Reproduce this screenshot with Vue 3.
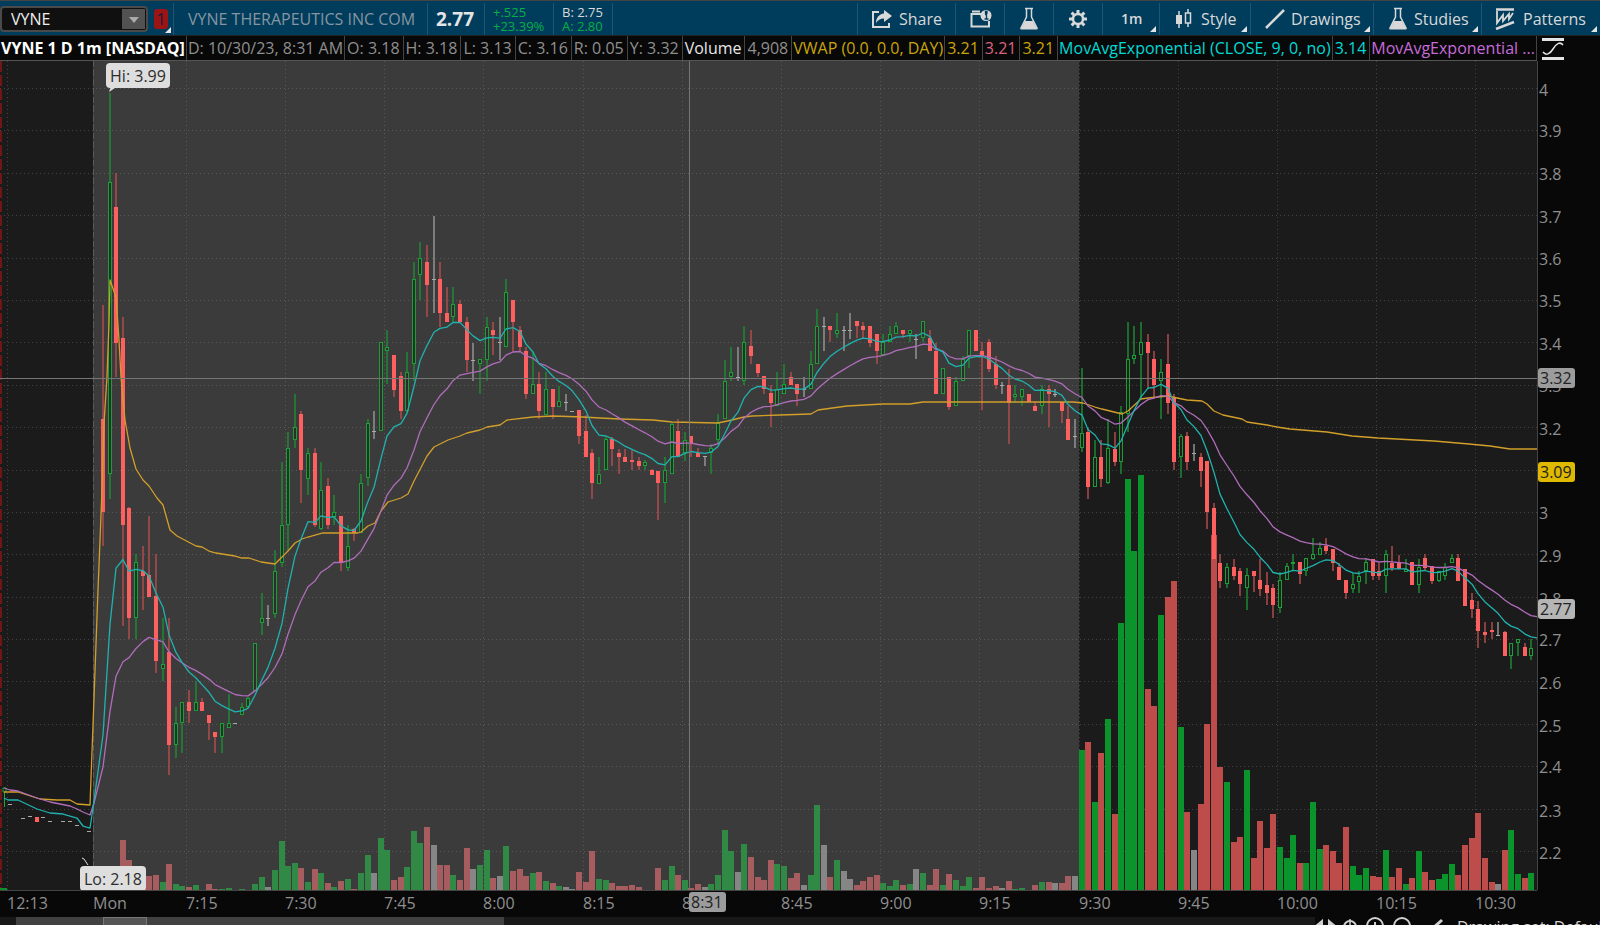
<template>
  <div class="platform">
    <header class="toolbar">
      <div class="symbol-box">
        <div class="select-wrap">
          <select v-model="symbol" aria-label="Symbol">
            <option>VYNE</option>
          </select>
        </div>
        <button class="link-badge corner" aria-label="Link group">1</button>
      </div>
      <div class="company">VYNE THERAPEUTICS INC COM</div>
      <div class="last">2.77</div>
      <div class="stack change"><span>+.525</span><span>+23.39%</span></div>
      <div class="stack quote"><span>B: 2.75</span><span class="up">A: 2.80</span></div>
      <div class="spacer"></div>
      <button class="tool share">
        <svg width="22" height="20" viewBox="0 0 22 20">
          <path d="M8 3H2v15h16v-4" fill="none" stroke="currentColor" stroke-width="2" />
          <path d="M13 1l8 6-8 6V9.500C9 9.500 7 11 5 14c0-5 3-9 8-9.500z" fill="currentColor" />
        </svg>
        Share
      </button>
      <button class="tool info" aria-label="Chart info">
        <svg width="22" height="20" viewBox="0 0 22 20">
          <path d="M11 5H1.500V17.500H19V12M2 2.500h8" fill="none" stroke="currentColor" stroke-width="2" />
          <circle cx="16" cy="6.500" r="5.500" fill="currentColor" />
          <path d="M15 5.500h1.500V10M14.500 10h4M15.500 2.500h1.500v1.500h-1.500z" fill="none" stroke="#003d5d" stroke-width="1.300" />
        </svg>
      </button>
      <button class="tool lab" aria-label="Lab">
        <svg width="20" height="24" viewBox="0 0 20 24">
          <path :d="flask" fill="none" stroke="currentColor" stroke-width="1.500" />
          <path :d="flaskFill" fill="currentColor" />
        </svg>
      </button>
      <button class="tool gear" aria-label="Settings">
        <svg width="20" height="20" viewBox="0 0 20 20">
          <g stroke="currentColor" stroke-width="3">
            <path v-for="a in [0, 45, 90, 135]" :key="a" d="M10 1v4M10 15v4" :transform="`rotate(${a} 10 10)`" />
          </g>
          <circle cx="10" cy="10" r="5" fill="none" stroke="currentColor" stroke-width="2.500" />
        </svg>
      </button>
      <button class="tool interval corner">1m</button>
      <button class="tool style corner">
        <svg width="18" height="20" viewBox="0 0 18 20">
          <path d="M4 2v17M13 0v4M13 14v4" stroke="currentColor" stroke-width="1.500" />
          <rect x="1" y="6" width="6" height="9" fill="currentColor" />
          <rect x="10.500" y="4" width="5" height="10" fill="none" stroke="currentColor" stroke-width="1.500" />
        </svg>
        Style
      </button>
      <button class="tool drawings corner">
        <svg width="20" height="20" viewBox="0 0 20 20"><path d="M1 19L19 1" stroke="currentColor" stroke-width="2.500" /></svg>
        Drawings
      </button>
      <button class="tool studies corner">
        <svg width="20" height="24" viewBox="0 0 20 24">
          <path :d="flask" fill="none" stroke="currentColor" stroke-width="1.500" />
          <path :d="flaskFill" fill="currentColor" />
        </svg>
        Studies
      </button>
      <button class="tool patterns corner">
        <svg width="20" height="22" viewBox="0 0 20 22">
          <path d="M1 1.500h18M1 21l18-7" stroke="currentColor" stroke-width="2.500" />
          <path d="M2 3v12l6-8v6l6-7v5l4-6" fill="none" stroke="currentColor" stroke-width="1.800" />
        </svg>
        Patterns
      </button>
    </header>

    <div class="legend">
      <div class="cells">
        <span v-for="(cell, n) in legend" :key="n" :class="['cell', cell[1]]">{{ cell[0] }}</span>
      </div>
      <button class="scale" aria-label="Scale settings">
        <svg width="22" height="24" viewBox="0 0 22 24">
          <path d="M0 2.500h22M0 21.500h22" stroke="currentColor" stroke-width="3" />
          <path d="M1 15c3 4 7 2 10-3s7-8 10-4" fill="none" stroke="currentColor" stroke-width="1.500" />
        </svg>
      </button>
    </div>

    <main class="chart">
      <div class="plot">
        <svg class="canvas" viewBox="0 61 1537 829" preserveAspectRatio="none">
          <rect x="93" y="61" width="986" height="829" class="premarket" />
          <g class="grid">
            <path v-for="p in prices" :key="p" :d="`M0 ${priceY(p)}H1537`" />
            <path v-for="t in times" :key="t.x" :d="`M${t.x + 0.5} 61V890`" />
          </g>
          <path d="M93.500 61V890" class="day-line" />
          <path d="M1 61V890" class="open-line" />

          <rect x="0" y="888" width="7" height="2" fill="#0b942b" />
          <rect v-for="b in bars" :key="b.i" :x="b.x - 3" :y="b.vol" width="6" :height="890 - b.vol" :fill="volumeColor(b)" />

          <g v-for="b in bars" :key="b.i" :class="['candle', b.kind]">
            <path :d="wick(b)" class="wick" />
            <rect v-if="b.kind === 'r'" :x="b.x - 2" :y="b.top" width="4" :height="Math.max(b.bottom - b.top, 1)" class="body" />
            <rect v-else-if="b.kind === 'g'" :x="b.x - 1.5" :y="b.top + 0.5" width="3" :height="Math.max(b.bottom - b.top - 1, 1)" class="body" />
            <path v-else :d="`M${b.x - 2} ${b.top + 0.5}h4`" class="tick" />
          </g>

          <path v-for="d in dashes" :key="d[0]" :d="`M${d[0] - 2} ${d[1]}.5h4`" class="tick" />
          <path d="M4.500 792V807M3 788h3v4h-3z" stroke="#1aa637" fill="none" />
          <rect x="35" y="817" width="4" height="5" fill="#fe5f5f" />

          <polyline :points="vwap" class="line vwap" />
          <polyline :points="slow" class="line slow" />
          <polyline :points="fast" class="line fast" />
          <path d="M0 378.500H1537M689.500 61V890" class="cross" />
          <path d="M109 92l2-6h7z" fill="#dedede" />
          <path d="M82 858l2 1 4 6" stroke="#dedede" fill="none" />
        </svg>
        <span class="bubble" :style="{ left: '6.9%', top: '0.2%' }">Hi: 3.99</span>
        <span class="bubble" :style="{ left: '5.2%', top: '97.1%' }">Lo: 2.18</span>
      </div>
      <div class="price-axis">
        <span v-for="p in labelled" :key="p" class="price" :style="{ top: axisTop(priceY(p)) }">{{ p / 10 }}</span>
        <span class="tag cursor" :style="{ top: axisTop(378) }">3.32</span>
        <span class="tag gold" :style="{ top: axisTop(472) }">3.09</span>
        <span class="tag last-price" :style="{ top: axisTop(609) }">2.77</span>
      </div>
      <div class="time-axis">
        <span v-for="t in times" :key="t.x" class="time" :style="{ left: t.x / 15.37 + '%' }">{{ t.label }}</span>
        <span class="tag time-tag" :style="{ left: 689 / 15.37 + '%' }">8:31</span>
      </div>
    </main>

    <footer class="bottom">
      <div class="scrollbar"><i class="thumb"><i class="grip"></i></i></div>
      <div class="chart-tools">
        <svg width="128" height="20" viewBox="0 0 128 20" fill="none" stroke="currentColor" stroke-width="2">
          <path d="M7 4L1 9l6 5zM14 4l6 5-6 5z" fill="currentColor" />
          <path d="M7 9h7" />
          <circle cx="35" cy="10" r="6" /><path d="M35 2v16M27 10h16" stroke-width="1.500" />
          <circle cx="60" cy="9" r="8" /><path d="M56 9h8M60 5v8" />
          <circle cx="87" cy="9" r="8" /><path d="M83 9h8" />
          <path d="M117 12l10-9" stroke-width="3" />
        </svg>
        <span>Drawing set: Default</span>
      </div>
    </footer>
  </div>
</template>

<script setup>
import { ref } from 'vue'

const symbol = ref('VYNE')

const flask = 'M6 1.500h8M7.500 2v8L2 21h16L12.500 10V2'
const flaskFill = 'M6 14h8l4.500 8.500h-17z'

const legend = [
  ['VYNE 1 D 1m [NASDAQ]', 'title long'],
  ['D: 10/30/23, 8:31 AM', 'long'],
  ['O: 3.18'],
  ['H: 3.18'],
  ['L: 3.13'],
  ['C: 3.16'],
  ['R: 0.05'],
  ['Y: 3.32'],
  ['Volume', 'white'],
  ['4,908'],
  ['VWAP (0.0, 0.0, DAY)', 'yellow long'],
  ['3.21', 'yellow'],
  ['3.21', 'pink'],
  ['3.21', 'yellow'],
  ['MovAvgExponential (CLOSE, 9, 0, no)', 'aqua long'],
  ['3.14', 'aqua'],
  ['MovAvgExponential ...', 'violet rest long']
]

// tenths of a dollar, 4.0 down to 2.2
const prices = Array.from({ length: 19 }, (_, n) => 40 - n)
// 3.1 lies fully under the 3.09 tag
const labelled = prices.filter((p) => p !== 31)
const priceY = (p) => Math.round(88 + (40 - p) * 42.39) + 0.5
const axisTop = (y) => ((y - 61) / 8.29).toFixed(2) + '%'

const times = [
  { x: 7, label: '12:13' },
  { x: 93, label: 'Mon' },
  { x: 186, label: '7:15' },
  { x: 285, label: '7:30' },
  { x: 384, label: '7:45' },
  { x: 483, label: '8:00' },
  { x: 583, label: '8:15' },
  { x: 682, label: '8:30' },
  { x: 781, label: '8:45' },
  { x: 880, label: '9:00' },
  { x: 979, label: '9:15' },
  { x: 1079, label: '9:30' },
  { x: 1178, label: '9:45' },
  { x: 1277, label: '10:00' },
  { x: 1376, label: '10:15' },
  { x: 1475, label: '10:30' }
]

// one minute each from 7:02: kind, high, body top, body bottom, low, volume top
const source = `
r 305 419 512 546 889,g 93 182 474 499 888,r 173 207 343 377 870,r 317 338 525 626 840,r 507 508 618 639 860,
g 554 562 618 639 872,r 546 571 576 610 874,r 516 575 597 597 876,r 554 596 661 673 875,g 618 664 669 681 882,
r 618 652 745 775 864,g 707 723 745 758 884,g 702 702 723 753 886,r 690 702 711 723 887,g 681 702 711 711 885,
r 698 702 711 711 890,r 715 715 723 740 884,r 732 732 737 753 889,g 723 723 737 753 889,g 694 723 728 728 888,
w 723 723 723 723 890,g 703 707 715 715 889,g 697 698 707 708 890,g 643 643 691 691 884,g 593 618 623 635 877,
w 605 618 618 626 887,g 550 571 614 618 870,g 462 525 563 567 841,g 432 448 525 551 866,g 394 427 440 448 863,
r 411 414 470 503 868,g 448 453 479 495 882,r 448 453 525 527 869,g 462 490 529 530 873,r 478 486 525 529 883,
g 495 512 517 525 887,r 516 516 563 571 881,g 525 546 568 571 879,r 528 529 533 541 889,g 474 483 533 533 873,
g 419 423 478 486 855,w 411 431 431 439 873,g 342 342 431 431 838,g 330 347 351 384 850,r 355 355 390 397 880,
r 372 376 411 419 877,g 352 372 411 412 867,g 262 279 364 381 831,g 242 258 275 300 843,r 245 262 285 317 827,
w 216 279 279 313 845,r 262 279 313 327 865,r 287 313 322 322 865,g 287 304 317 322 875,r 300 304 322 322 880,
r 317 322 360 372 848,w 343 360 360 381 869,g 359 359 364 394 865,g 317 327 360 381 850,r 322 330 335 355 878,
w 317 342 342 360 876,g 279 292 347 347 846,r 300 300 322 352 871,r 326 330 347 352 869,r 347 351 394 399 876,
g 352 384 394 394 873,r 372 384 411 419 872,g 372 389 415 415 881,r 389 389 407 419 883,g 386 401 407 407 886,
w 394 402 402 411 887,w 411 411 411 411 889,r 410 410 436 444 872,r 415 431 457 457 882,r 449 453 483 499 851,
g 457 474 484 484 879,g 437 439 470 470 880,r 437 439 449 466 883,r 449 453 457 474 886,r 449 457 462 462 886,
r 450 460 462 470 885,r 457 461 466 470 887,g 460 462 466 470 890,r 469 470 475 475 890,r 471 471 483 520 868,
g 457 470 483 503 880,g 423 424 474 474 866,r 419 431 457 457 875,g 432 440 453 461 880,r 436 436 444 457 888,
r 448 453 457 457 884,w 456 456 456 466 887,g 444 448 453 474 884,g 414 423 440 444 875,g 360 381 419 419 830,
g 347 372 377 381 851,w 347 377 377 381 872,g 326 342 381 385 844,r 330 346 356 364 857,r 364 364 373 377 877,
r 376 376 389 394 880,r 385 393 403 427 860,g 372 389 406 406 864,g 364 384 394 394 866,r 372 377 385 385 878,
r 384 384 394 406 873,w 377 389 389 397 885,g 351 364 389 389 875,g 309 326 364 364 805,w 317 326 326 351 845,
r 326 326 330 342 877,g 313 330 334 338 860,w 326 330 330 351 871,w 313 330 330 339 879,r 321 321 326 338 885,
r 322 326 330 338 881,r 326 326 343 347 877,r 334 334 351 364 875,g 334 342 355 356 883,g 326 334 342 342 886,
g 322 326 334 334 880,r 330 330 334 338 885,g 330 330 334 342 884,w 334 339 339 359 869,g 321 321 338 342 873,
r 330 338 351 351 885,r 343 351 394 394 869,g 368 368 394 394 885,r 377 377 407 410 874,g 377 381 406 406 880,
g 356 359 381 381 886,g 330 330 356 368 877,r 330 330 351 351 888,r 342 351 356 410 877,r 339 342 369 372 888,
r 356 364 385 389 886,w 382 385 385 394 888,r 369 385 403 444 881,g 385 394 397 402 889,g 389 389 397 406 888,
r 394 394 402 402 890,r 402 406 411 411 885,g 385 389 406 414 882,r 385 389 394 427 882,w 389 394 394 397 883,
r 402 402 411 423 883,r 406 419 440 440 876,w 419 436 436 448 876,g 368 433 448 452 750,r 428 432 487 499 742,
g 440 457 487 487 802,r 440 457 479 487 753,g 419 448 483 484 719,r 432 449 462 466 814,g 406 412 462 474 623,
g 322 359 414 432 479,g 326 355 359 364 551,g 322 342 355 398 475,r 334 342 353 389 689,r 351 359 385 397 706,
g 359 372 381 419 615,r 334 364 403 414 597,r 394 398 462 470 581,g 434 436 457 478 727,r 432 436 462 470 812,
w 444 453 453 461 850,r 453 457 471 487 804,r 461 461 512 529 724,r 503 508 559 580 535,r 554 563 581 588 767,
g 563 567 584 588 782,r 559 567 576 580 842,r 568 571 584 596 837,g 568 575 588 610 770,r 571 571 576 592 858,
r 559 580 589 596 821,r 572 585 593 605 848,r 584 588 605 618 814,g 572 580 608 613 847,g 563 566 580 580 858,
g 554 562 563 570 835,r 562 562 574 584 863,g 558 558 571 576 863,g 538 554 559 560 802,g 542 548 555 555 849,
r 538 546 551 554 845,r 549 549 563 571 851,r 563 567 580 580 863,r 580 580 593 599 827,g 573 584 589 593 866,
g 571 576 582 593 875,g 558 562 571 584 868,r 559 559 576 580 876,r 563 571 576 580 877,g 550 554 576 593 850,
r 546 563 568 571 877,r 555 562 569 569 868,g 559 569 572 572 884,r 562 562 585 585 878,g 559 567 585 593 851,
r 554 558 568 571 872,r 566 566 581 584 880,g 571 571 581 582 879,g 563 567 576 580 874,g 554 558 563 563 864,
r 554 558 581 581 875,r 569 569 606 606 845,r 593 600 609 618 838,r 601 609 631 648 813,r 622 632 635 643 858,
r 622 630 632 639 882,w 622 635 635 635 884,r 631 632 656 656 850,g 643 643 656 669 830,g 639 639 643 656 874,
r 643 647 656 656 878,g 639 648 656 660 873`

const bars = source.trim().split(/,\s*/).map((row, n) => {
  const [kind, ...values] = row.split(' ')
  const [high, top, bottom, low, vol] = values.map(Number)
  return { i: n + 2, x: Math.round(89.8 + (n + 2) * 6.612), kind, high, top, bottom, low, vol }
})

const dashes = [
  [10, 804], [23, 818], [30, 816], [43, 817], [50, 821], [56, 813],
  [63, 821], [70, 821], [77, 825], [89, 831]
]

const wick = (b) => `M${b.x} ${b.high}V${b.top}M${b.x} ${b.bottom}V${b.low}`

const volumeColor = (b) => {
  if (b.kind === 'w') return '#868686'
  if (b.i < 150) return b.kind === 'g' ? '#308a46' : '#a75d5f'
  return b.kind === 'g' ? '#0b942b' : '#bd4c4b'
}

// exponential average of the closes, drawn on from the values of the day before
const average = (length, before, seed) => {
  const points = [...before]
  let value = seed
  bars.forEach((b, n) => {
    const close = b.kind === 'r' ? b.bottom : b.top
    if (n > 0) value += (close - value) * 2 / (length + 1)
    points.push(`${b.x},${value.toFixed(1)}`)
  })
  points.push(`1537,${(value + 1).toFixed(1)}`)
  return points.join(' ')
}

const fast = average(9, ['4,798', '8,800', '18,800', '37,809', '50,813', '63,814', '77,818', '83,826', '90,828', '93,808'], 735)
const slow = average(20, ['4,788', '10,790', '18,791', '37,798', '50,802', '70,806', '77,809', '83,812', '90,815', '94,803'], 767)

const vwap = `4,792 18,792 40,799 57,800 70,800 77,804 90,805 93,725 98,590 102,490 104,423 107,377 109,323
110,280 116,297 119,340 121,377 125,420 130,448 136,469 143,480 149,486 157,498 163,505 170,530 177,536
196,546 202,547 209,551 216,553 235,556 242,558 249,558 261,562 275,564 282,557 288,551 295,543 302,539
308,537 322,533 358,533 361,532 368,526 375,523 381,511 388,502 401,498 408,494 414,481 427,456 434,447
448,440 460,436 467,433 480,430 487,427 500,425 507,420 533,417 553,416 583,417 600,418 620,419 653,420
672,422 718,423 732,420 744,417 752,416 780,415 811,414 818,410 847,406 883,404 910,404 923,402 1073,402
1083,403 1095,407 1102,409 1122,414 1128,411 1141,399 1148,398 1168,396 1177,398 1187,400 1202,401 1207,404
1214,411 1223,415 1242,419 1247,422 1267,425 1277,427 1290,429 1327,432 1352,436 1378,438 1434,441 1469,444
1490,446 1510,449 1537,449`
</script>

<style>
body {
  background: #080808;
}
</style>

<style scoped>
.platform {
  display: flex;
  flex-direction: column;
  height: 100vh;
  overflow: hidden;
  background: #080808;
  color: #8f8f8f;
  font-family: "Open Sans", "Noto Sans", sans-serif;
  font-size: 16px;
  line-height: 20px;
  white-space: nowrap;
}

button {
  padding: 0;
  border: 0;
  background: none;
  color: inherit;
  font: inherit;
}

.toolbar {
  display: flex;
  flex: none;
  box-sizing: border-box;
  height: 36px;
  padding-top: 2px;
  border-top: 1px solid #444;
  border-bottom: 1px solid #222;
  background: #003d5d;
  color: #d8d8d8;
}

.toolbar > * {
  box-sizing: border-box;
  border-right: 1px solid #1f5473;
}

.symbol-box {
  display: flex;
  align-items: center;
  gap: 6px;
  width: 174px;
}

.select-wrap {
  position: relative;
  width: 148px;
}

.select-wrap::before {
  content: "";
  position: absolute;
  top: 3px;
  right: 3px;
  width: 23px;
  height: 20px;
  background: #525252;
  pointer-events: none;
}

.select-wrap::after {
  content: "";
  position: absolute;
  top: 11px;
  right: 9px;
  border: 5px solid transparent;
  border-top: 6px solid #aaa;
  border-bottom: 0;
  pointer-events: none;
}

select {
  display: block;
  width: 100%;
  height: 26px;
  padding: 0 9px;
  border: 2px solid #4a4a4a;
  border-radius: 4px;
  appearance: none;
  background: #101010;
  color: #eee;
  font: inherit;
}

.link-badge {
  width: 14px;
  height: 20px;
  border-radius: 3px;
  background: #9c1515;
  color: #1a1b38;
}

.corner {
  position: relative;
}

.corner::after {
  content: "";
  position: absolute;
  right: 3px;
  bottom: 3px;
  border-left: 6px solid transparent;
  border-bottom: 6px solid #e4e4e4;
}

.link-badge.corner::after {
  right: -3px;
  bottom: -4px;
}

.company {
  width: 254px;
  padding: 6px 0 0 14px;
  color: #8795a0;
}

.last {
  width: 57px;
  padding: 6px 0 0 8px;
  font-size: 19px;
  font-weight: 700;
  color: #e5e5e5;
}

.stack {
  display: flex;
  flex-direction: column;
  padding: 2px 0 0 8px;
  font-size: 13px;
  line-height: 14px;
}

.change {
  width: 69px;
}

.quote {
  width: 59px;
}

.change,
.up {
  color: #06ae45;
}

.spacer {
  flex: 1;
}

.tool {
  display: flex;
  align-items: center;
  gap: 6px;
  padding-left: 14px;
}

.tool svg,
.scale svg {
  display: block;
}

.share { width: 98px; padding-left: 13px; }
.info { width: 49px; }
.lab { width: 49px; }
.gear { width: 49px; }
.interval { width: 57px; padding-left: 18px; font-size: 14px; font-weight: 600; }
.style { width: 91px; gap: 8px; padding-left: 15px; }
.drawings { width: 123px; }
.studies { width: 108px; }
.patterns { width: 118px; gap: 8px; padding-left: 13px; border-right: 0; }

.legend {
  display: grid;
  grid-template-columns: 1fr 63px;
  flex: none;
  height: 25px;
}

.cells {
  display: flex;
  min-width: 0;
  border-right: 1px solid #444;
  border-bottom: 1px solid #555;
}

.cell {
  padding: 2px 3px 0 2px;
  border-right: 1px solid #444;
}

.long {
  padding: 2px 1px 0;
}

.title { color: #fff; font-weight: 700; }
.white { color: #e8e8e8; }
.yellow { color: #c9a40a; }
.pink { color: #dc6480; }
.aqua { color: #00d9d6; }
.violet { color: #c76bdb; }

.rest {
  flex: 1;
  margin-right: 6px;
}

.scale {
  display: flex;
  align-items: center;
  padding-left: 5px;
  color: #e4e4e4;
}

.chart {
  display: grid;
  grid-template-columns: 1fr 63px;
  grid-template-rows: 1fr 27px;
  flex: 1;
  min-height: 0;
}

.plot {
  position: relative;
  min-height: 0;
  background: #1b1b1b;
}

.canvas {
  position: absolute;
  width: 100%;
  height: 100%;
}

.premarket { fill: #3b3b3b; }

.grid path {
  fill: none;
  stroke: #888;
  stroke-opacity: 0.38;
  stroke-dasharray: 1 3;
}

.day-line {
  stroke: #5a5a5a;
  stroke-dasharray: 6 3;
}

.open-line {
  stroke: #6f1616;
  stroke-width: 2;
  stroke-dasharray: 11 3;
}

.wick { stroke-width: 1.4; }
.r .wick { stroke: #b84f4f; }
.g .wick { stroke: #1d8f35; }
.w .wick { stroke: #999; }
.r .body { fill: #fe5f5f; }
.g .body { fill: #1b241d; fill-opacity: 0.5; stroke: #1a9e35; }
.tick { stroke: #aaa; }

.line {
  fill: none;
  stroke-width: 1.3;
  stroke-linejoin: round;
}

.vwap { stroke: #d19f2a; }
.fast { stroke: #20b2ae; }
.slow { stroke: #b06cbb; }
.cross { stroke: #757575; }

.bubble {
  position: absolute;
  padding: 3px 4px 2px;
  border-radius: 4px;
  background: #dedede;
  color: #2c2c2c;
}

.price-axis {
  position: relative;
  border-left: 1px solid #444;
}

.price {
  position: absolute;
  left: 1px;
  transform: translateY(-9px);
}

.tag {
  position: absolute;
  left: 0;
  padding: 0 3px 0 2px;
  border-radius: 3px;
  background: #b5b5b5;
  color: #222;
  transform: translateY(-10px);
}

.cursor { background: #9c9c9c; }
.gold { background: #dfb800; }

.time-axis {
  position: relative;
  border-top: 1px solid #444;
}

.time {
  position: absolute;
  top: 2px;
}

.time-tag {
  top: 1px;
  background: #9c9c9c;
  transform: none;
}

.bottom {
  display: flex;
  flex: none;
  height: 8px;
  overflow: hidden;
  background: #181818;
}

.scrollbar {
  flex: 1;
  padding-left: 16px;
}

.thumb {
  display: block;
  width: 488px;
  height: 8px;
  padding-left: 87px;
  box-sizing: border-box;
  background: #414141;
}

.grip {
  display: block;
  width: 42px;
  height: 8px;
  border: 1px solid #777;
  border-bottom: 0;
  background: #555;
}

.chart-tools {
  display: flex;
  align-items: flex-start;
  gap: 14px;
  width: 285px;
  height: 24px;
  background: #080808;
  color: #d0d0d0;
}

.chart-tools svg {
  flex: none;
}
</style>
